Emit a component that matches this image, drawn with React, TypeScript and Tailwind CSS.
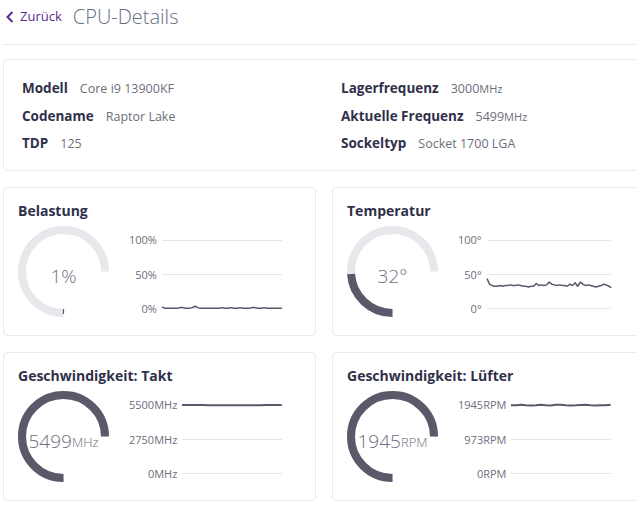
import React from 'react'

const font = { fontFamily: '"Open Sans", "Noto Sans", sans-serif' }

type Metric = {
  title: string
  value: string
  unit?: string
  percent: number
  labels: string[]
  data: number[]
  thick?: boolean
}

const load = [3, 1, 1, 1, 1, 1, 2, 2, 1, 1, 2, 4, 2, 1, 1, 1, 1, 1, 1, 1, 2, 1, 1, 2, 1, 1, 2, 1, 1, 1, 2, 2, 1, 1, 2, 1, 1, 1, 1, 1, 1]
const temp = [44, 36, 34, 33, 33, 34, 33, 34, 34, 35, 34, 34, 35, 34, 33, 33, 32, 33, 33, 37, 34, 35, 34, 35, 39, 36, 35, 34, 35, 34, 34, 33, 36, 34, 38, 33, 39, 36, 34, 35, 34, 33, 32, 33, 34, 36, 35, 33, 31]
const clock = [100, 100, 100, 100, 100, 99.8, 99.8, 99.8, 99.8, 99.8, 99.8, 99.8, 99.8, 99.8, 99.8, 99.8, 100, 100, 100, 100]
const fan = [99.5, 99.5, 100.3, 99.6, 99.4, 99.8, 100.4, 99.6, 99.4, 100.2, 100.4, 99.6, 99.4, 99.5, 99.9, 100.4, 99.6, 99.4, 99.5, 99.6, 100.4]

const metrics: Metric[] = [
  { title: 'Belastung', value: '1%', percent: 0.01, labels: ['100%', '50%', '0%'], data: load },
  { title: 'Temperatur', value: '32°', percent: 0.32, labels: ['100°', '50°', '0°'], data: temp },
  { title: 'Geschwindigkeit: Takt', value: '5499', unit: 'MHz', percent: 0.9998, labels: ['5500MHz', '2750MHz', '0MHz'], data: clock, thick: true },
  { title: 'Geschwindigkeit: Lüfter', value: '1945', unit: 'RPM', percent: 1, labels: ['1945RPM', '973RPM', '0RPM'], data: fan, thick: true },
]

function arc(from: number, to: number) {
  const c = 45.5
  const r = 41.5
  const a0 = (from * Math.PI) / 180
  const a1 = (to * Math.PI) / 180
  const x0 = c + r * Math.cos(a0)
  const y0 = c + r * Math.sin(a0)
  const x1 = c + r * Math.cos(a1)
  const y1 = c + r * Math.sin(a1)
  const large = to - from > 180 ? 1 : 0
  return `M ${x0} ${y0} A ${r} ${r} 0 ${large} 1 ${x1} ${y1}`
}

function Gauge({ m }: { m: Metric }) {
  const end = 90 + 270 * m.percent
  return (
    <div className="relative w-[91px] h-[91px] shrink-0">
      <svg width="91" height="91" viewBox="0 0 91 91">
        <path d={arc(90, 360)} fill="none" stroke="#e6e8eb" strokeWidth="8" />
        {m.percent < 0.05 ? (
          <line x1="45.5" y1="83" x2="45.5" y2="88" stroke="#5b5869" strokeWidth="1.2" />
        ) : (
          <path d={arc(90, end)} fill="none" stroke="#5b5869" strokeWidth="8" />
        )}
      </svg>
      <div className="absolute inset-0 flex items-center justify-center pt-[9px] text-[#6e6e7c] font-light" style={font}>
        <span className="text-[19px] leading-none">{m.value}</span>
        {m.unit && <span className="text-[13px] leading-none mt-[3px]">{m.unit}</span>}
      </div>
    </div>
  )
}

function Chart({ m }: { m: Metric }) {
  const n = m.data.length
  const pts = m.data.map((v, i) => `${(i / (n - 1)) * 100},${100 - v}`).join(' ')
  return (
    <div className="flex-1 flex mt-[4px] h-[89px]">
      <div className="flex flex-col justify-between items-end text-[11px] text-[#6e6e7c]" style={font}>
        {m.labels.map((l) => (
          <div key={l} className="h-[20px] leading-[20px]">{l}</div>
        ))}
      </div>
      <div className="flex-1 ml-[5px] py-[10px]">
        <div className="relative h-full flex flex-col justify-between">
          <div className="border-t border-[#e4e6e9]" />
          <div className="border-t border-[#e4e6e9]" />
          <div className="border-t border-[#e4e6e9]" />
          <svg className="absolute inset-0 w-full h-full overflow-visible" viewBox="0 0 100 100" preserveAspectRatio="none">
            <polyline points={pts} fill="none" stroke="#5b5869" strokeWidth={m.thick ? 2 : 1.5} vectorEffect="non-scaling-stroke" strokeLinejoin="round" />
          </svg>
        </div>
      </div>
    </div>
  )
}

function MetricCard({ m }: { m: Metric }) {
  return (
    <div className="w-[313px] border border-[#ebebeb] rounded-[4px] bg-white pt-[13px] pb-[16px] pl-[14px] pr-[33px]">
      <h2 className="text-[14px] leading-[20px] font-bold text-[#30304a] mb-[5px]" style={font}>{m.title}</h2>
      <div className="flex items-start gap-[20px]">
        <Gauge m={m} />
        <Chart m={m} />
      </div>
    </div>
  )
}

function Row({ label, value, unit }: { label: string; value: string; unit?: string }) {
  return (
    <div className="flex items-baseline gap-[12px] h-[27.5px] leading-[27.5px]" style={font}>
      <span className="text-[13.5px] font-bold text-[#30304a]">{label}</span>
      <span className="text-[12.5px] text-[#6e6e7c]">
        {value}
        {unit && <span className="text-[11px]">{unit}</span>}
      </span>
    </div>
  )
}

export default function App() {
  return (
    <div className="w-[636px] h-[521px] overflow-hidden bg-white">
      <div className="w-[645px] pl-[3px]">
        <div className="flex items-center h-[45px] pb-[10px] border-b border-[#ebebeb] -ml-[1px]">
          <button className="flex items-center gap-[6px] pl-[4px] text-[13px] text-[#5c2a8c]" style={font}>
            <svg width="8" height="12" viewBox="0 0 8 12">
              <path d="M6.5 1 L1.5 6 L6.5 11" fill="none" stroke="#5c2a8c" strokeWidth="2" />
            </svg>
            Zurück
          </button>
          <h1 className="ml-[11px] text-[20px] font-light text-[#657084]" style={font}>CPU-Details</h1>
        </div>

        <div className="mt-[14px] border border-[#ebebeb] rounded-[4px] pt-[15px] pb-[12.5px] pl-[18px] flex">
          <div className="w-[319px]">
            <Row label="Modell" value="Core i9 13900KF" />
            <Row label="Codename" value="Raptor Lake" />
            <Row label="TDP" value="125" />
          </div>
          <div>
            <Row label="Lagerfrequenz" value="3000" unit="MHz" />
            <Row label="Aktuelle Frequenz" value="5499" unit="MHz" />
            <Row label="Sockeltyp" value="Socket 1700 LGA" />
          </div>
        </div>

        <div className="mt-[16px] grid grid-cols-[313px_313px] gap-[16px]">
          {metrics.map((m) => (
            <MetricCard key={m.title} m={m} />
          ))}
        </div>
      </div>
    </div>
  )
}
